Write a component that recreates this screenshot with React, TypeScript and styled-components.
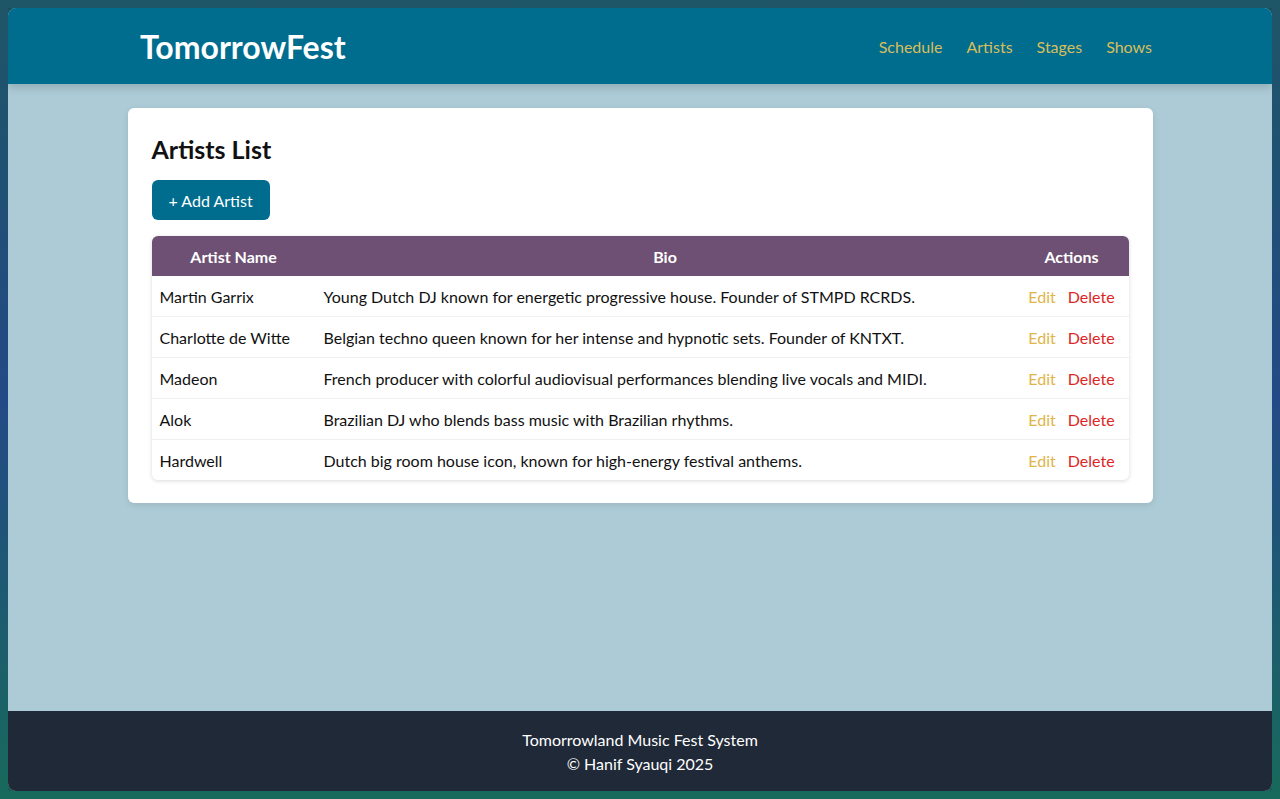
import React from "react";
import styled, { createGlobalStyle } from "styled-components";

const Global = createGlobalStyle`
  html {
    background: linear-gradient(180deg, #1e5566 0%, #234a86 50%, #186a5c 100%);
    min-height: 100%;
  }
  body {
    margin: 8px;
    font-family: Lato, "Noto Sans", sans-serif;
    color: #111;
  }
`;

const Shell = styled.div`
  min-height: calc(100vh - 16px);
  display: flex;
  flex-direction: column;
  background: #adcbd6;
  border-radius: 8px;
  overflow: hidden;
  box-shadow: 0 0 10px rgba(0, 0, 0, 0.35);
`;

const Header = styled.header`
  background: #006d8f;
  height: 76px;
  box-shadow: 0 4px 8px rgba(0, 0, 0, 0.15);
`;

const HeaderInner = styled.div`
  max-width: 1024px;
  height: 100%;
  margin: 0 auto;
  display: flex;
  align-items: center;
  justify-content: space-between;
`;

const Brand = styled.h1`
  margin: 0 0 0 12px;
  color: #fff;
  font-size: 32px;
  font-weight: 700;
`;

const Nav = styled.nav`
  display: flex;
  gap: 24px;
`;

const NavLink = styled.a`
  color: #d8be5c;
  font-size: 16px;
  text-decoration: none;
`;

const Main = styled.main`
  flex: 1;
  padding: 24px 0;
`;

const Card = styled.section`
  max-width: 1025px;
  margin: 0 auto;
  background: #fff;
  border-radius: 6px;
  padding: 24px 24px 23px;
  box-sizing: border-box;
  box-shadow: 0 2px 6px rgba(0, 0, 0, 0.1);
`;

const Title = styled.h2`
  margin: 2px 0 16px;
  font-size: 25px;
  font-weight: 700;
  color: #111;
`;

const AddButton = styled.button`
  background: #006d8f;
  color: #fff;
  border: none;
  border-radius: 6px;
  height: 40px;
  padding: 0 17px;
  font-family: inherit;
  font-size: 16px;
  margin-bottom: 16px;
  cursor: pointer;
`;

const Table = styled.table`
  width: 100%;
  border-collapse: collapse;
  border-radius: 6px;
  overflow: hidden;
  box-shadow: 0 1px 4px rgba(0, 0, 0, 0.15);
`;

const Th = styled.th<{ $w?: number }>`
  background: #6d5073;
  color: #fff;
  font-weight: 700;
  font-size: 16px;
  height: 40px;
  padding: 0 8px;
  text-align: center;
  width: ${(p) => (p.$w ? `${p.$w}px` : "auto")};
`;

const Td = styled.td<{ $center?: boolean }>`
  padding: 0 8px;
  height: 40px;
  font-size: 16px;
  text-align: ${(p) => (p.$center ? "center" : "left")};
  white-space: nowrap;
`;

const Tr = styled.tr`
  & + & td {
    border-top: 1px solid #f0f0f0;
  }
`;

const Action = styled.a<{ $danger?: boolean }>`
  color: ${(p) => (p.$danger ? "#dc2626" : "#e0b548")};
  text-decoration: none;
  & + & {
    margin-left: 12px;
  }
`;

const Footer = styled.footer`
  background: #1f2937;
  color: #fff;
  text-align: center;
  padding: 17px 0 15px;
  font-size: 16px;
  line-height: 24px;
`;

const artists = [
  ["Martin Garrix", "Young Dutch DJ known for energetic progressive house. Founder of STMPD RCRDS."],
  ["Charlotte de Witte", "Belgian techno queen known for her intense and hypnotic sets. Founder of KNTXT."],
  ["Madeon", "French producer with colorful audiovisual performances blending live vocals and MIDI."],
  ["Alok", "Brazilian DJ who blends bass music with Brazilian rhythms."],
  ["Hardwell", "Dutch big room house icon, known for high-energy festival anthems."],
];

export default function App() {
  return (
    <>
      <Global />
      <Shell>
        <Header>
          <HeaderInner>
            <Brand>TomorrowFest</Brand>
            <Nav>
              <NavLink href="#">Schedule</NavLink>
              <NavLink href="#">Artists</NavLink>
              <NavLink href="#">Stages</NavLink>
              <NavLink href="#">Shows</NavLink>
            </Nav>
          </HeaderInner>
        </Header>
        <Main>
          <Card>
            <Title>Artists List</Title>
            <AddButton>+ Add Artist</AddButton>
            <Table>
              <thead>
                <tr>
                  <Th $w={148}>Artist Name</Th>
                  <Th>Bio</Th>
                  <Th $w={98}>Actions</Th>
                </tr>
              </thead>
              <tbody>
                {artists.map(([name, bio]) => (
                  <Tr key={name}>
                    <Td>{name}</Td>
                    <Td>{bio}</Td>
                    <Td $center>
                      <Action href="#">Edit</Action>
                      <Action href="#" $danger>
                        Delete
                      </Action>
                    </Td>
                  </Tr>
                ))}
              </tbody>
            </Table>
          </Card>
        </Main>
        <Footer>
          <div>Tomorrowland Music Fest System</div>
          <div>© Hanif Syauqi 2025</div>
        </Footer>
      </Shell>
    </>
  );
}
